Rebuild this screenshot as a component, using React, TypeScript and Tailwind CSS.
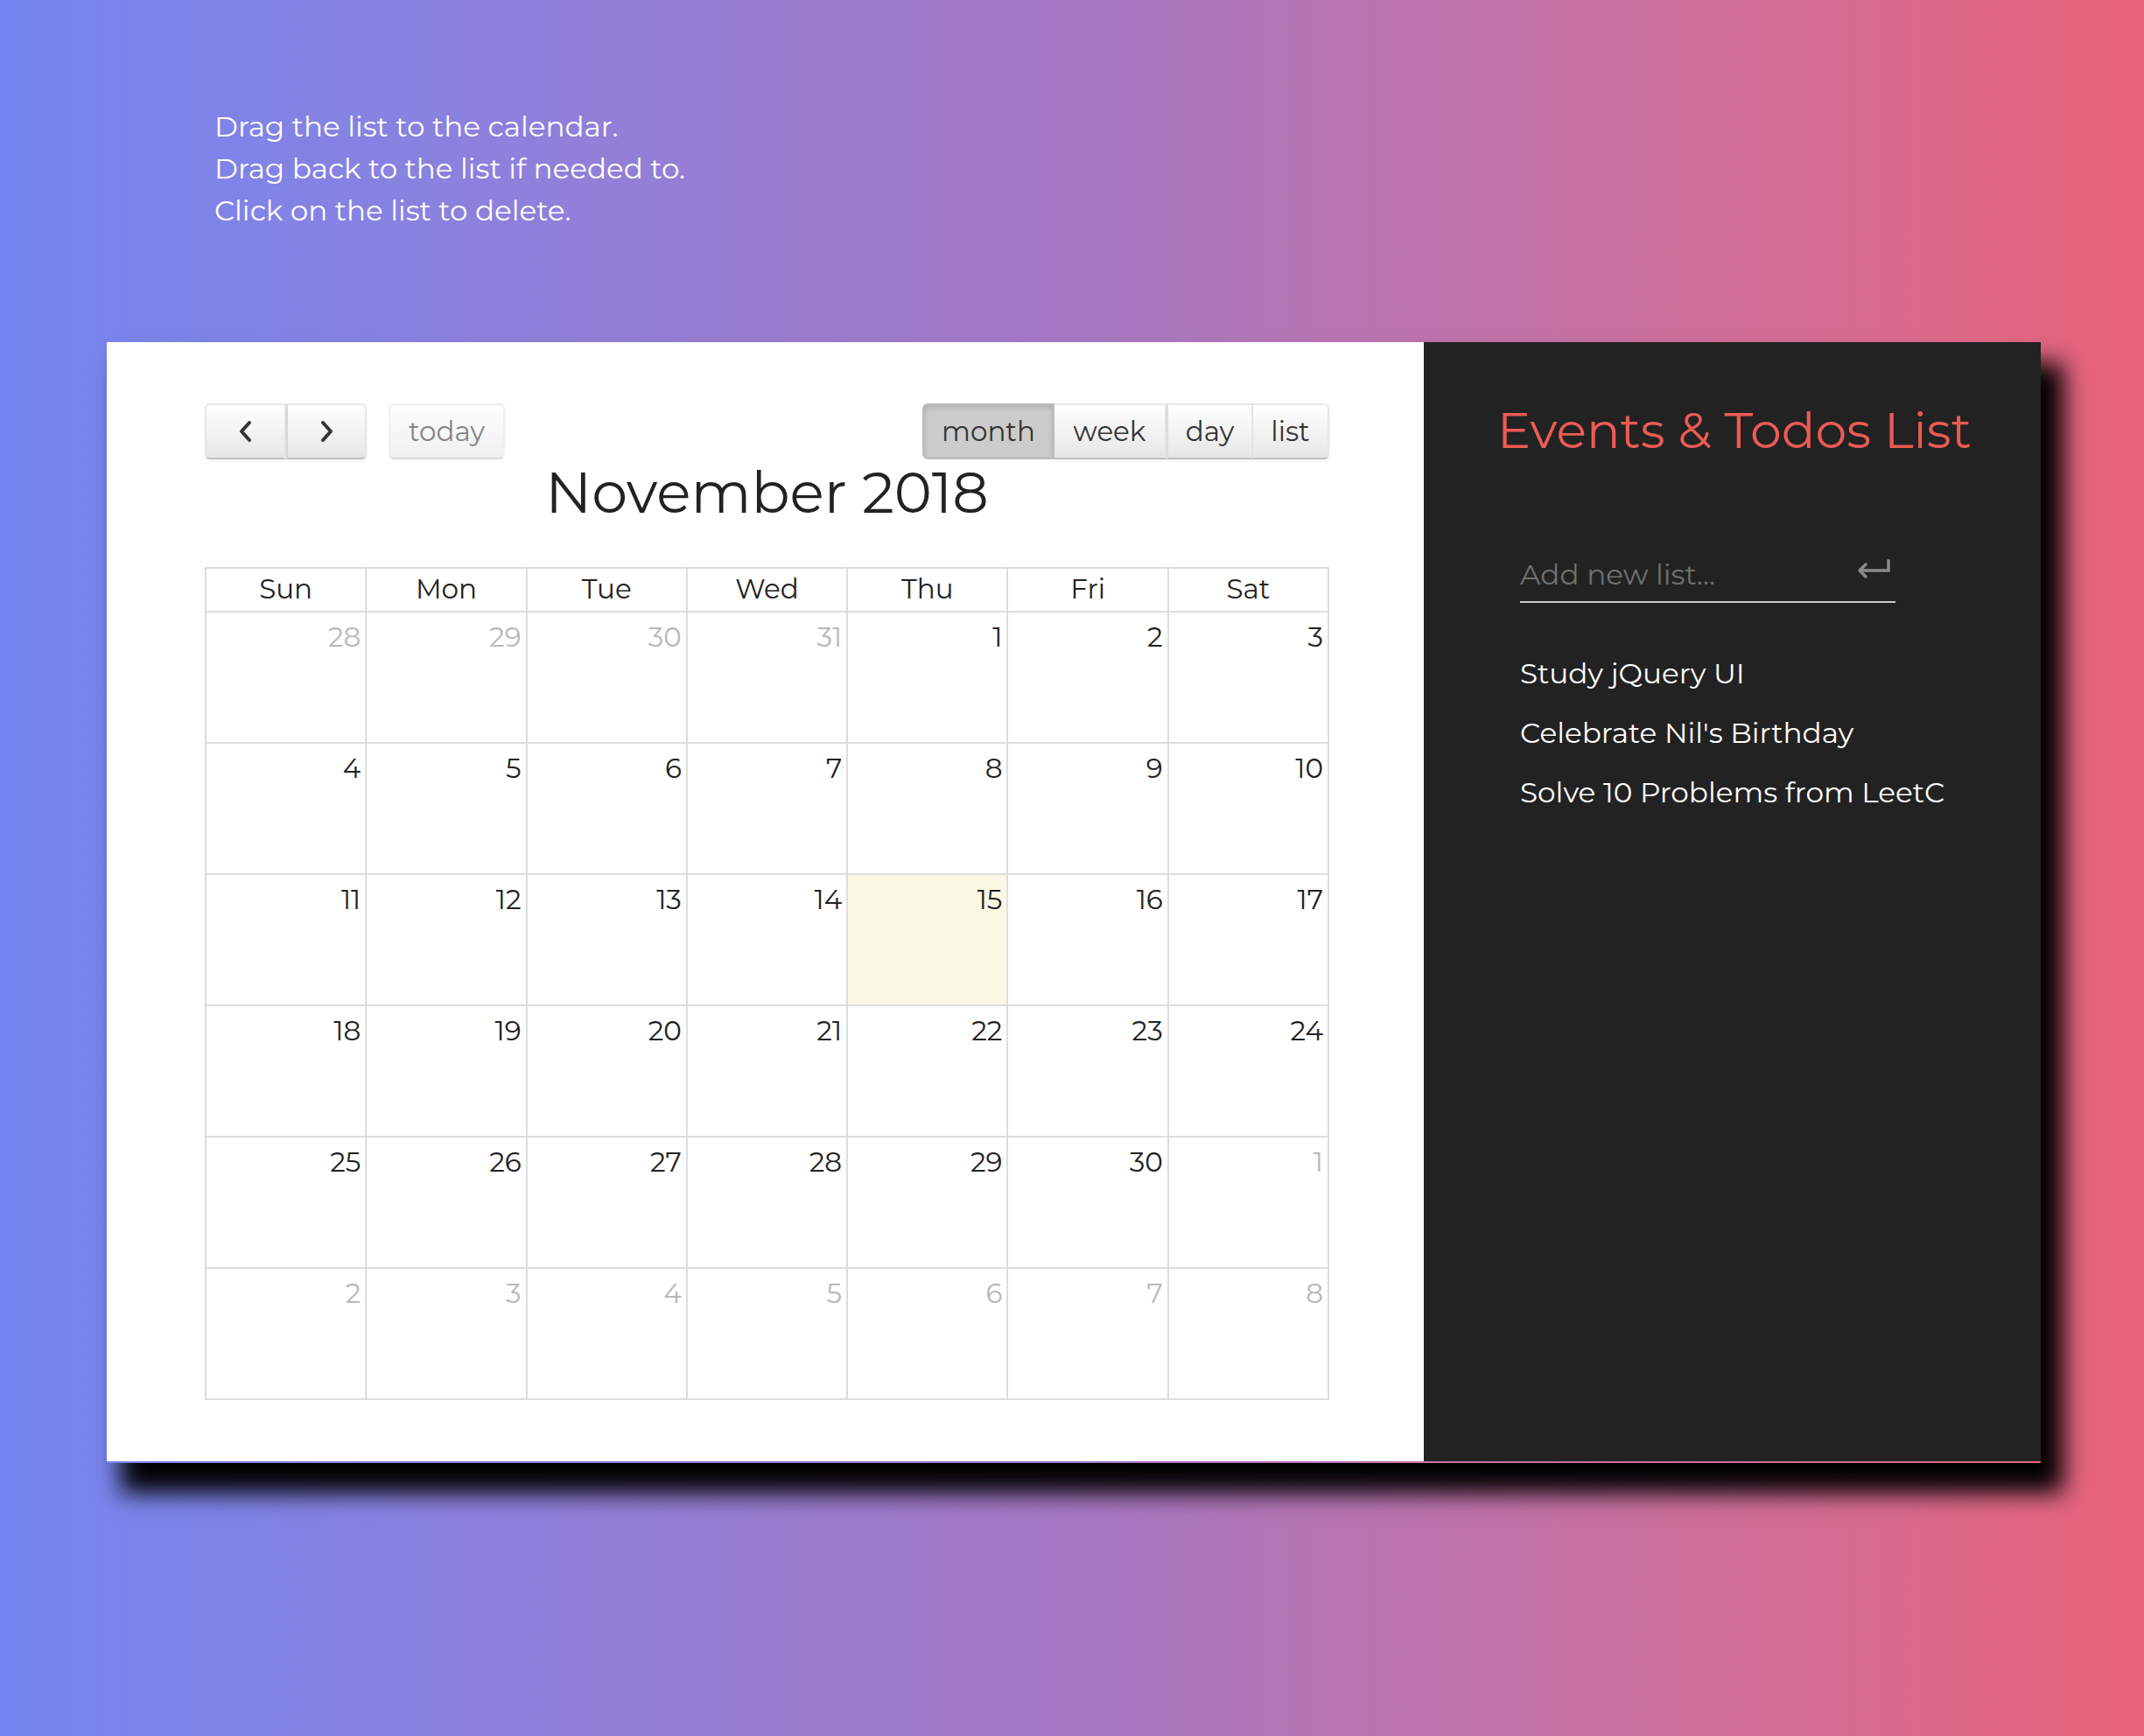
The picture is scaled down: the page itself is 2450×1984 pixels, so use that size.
const weeks: { d: number; other?: boolean; today?: boolean }[][] = [
  [{ d: 28, other: true }, { d: 29, other: true }, { d: 30, other: true }, { d: 31, other: true }, { d: 1 }, { d: 2 }, { d: 3 }],
  [{ d: 4 }, { d: 5 }, { d: 6 }, { d: 7 }, { d: 8 }, { d: 9 }, { d: 10 }],
  [{ d: 11 }, { d: 12 }, { d: 13 }, { d: 14 }, { d: 15, today: true }, { d: 16 }, { d: 17 }],
  [{ d: 18 }, { d: 19 }, { d: 20 }, { d: 21 }, { d: 22 }, { d: 23 }, { d: 24 }],
  [{ d: 25 }, { d: 26 }, { d: 27 }, { d: 28 }, { d: 29 }, { d: 30 }, { d: 1, other: true }],
  [{ d: 2, other: true }, { d: 3, other: true }, { d: 4, other: true }, { d: 5, other: true }, { d: 6, other: true }, { d: 7, other: true }, { d: 8, other: true }]
]

const dayNames = ['Sun', 'Mon', 'Tue', 'Wed', 'Thu', 'Fri', 'Sat']

const todos = ['Study jQuery UI', "Celebrate Nil's Birthday", 'Solve 10 Problems from LeetC']

const btn =
  'flex h-[64px] items-center justify-center border-2 border-[#e6e6e6] border-b-[#bfbfbf] bg-linear-to-b from-white to-[#e6e6e6] text-[31px] text-[#333] shadow-[0_2px_3px_rgba(0,0,0,0.06)]'

const Chevron = ({ dir }: { dir: 'left' | 'right' }) => (
  <svg width="22" height="28" viewBox="0 0 22 28" fill="none" stroke="#333" strokeWidth="4" strokeLinecap="round" strokeLinejoin="round">
    {dir === 'left' ? <polyline points="15,4 6,14 15,24" /> : <polyline points="7,4 16,14 7,24" />}
  </svg>
)

const EnterIcon = () => (
  <svg width="40" height="24" viewBox="0 0 40 24" fill="none" stroke="#8a8a8a" strokeWidth="3.5" strokeLinecap="square">
    <path d="M37 2v11H5" />
    <path d="M11 6l-7 7 7 7" strokeLinecap="round" strokeLinejoin="round" />
  </svg>
)

export default function App() {
  return (
    <div className="min-h-screen w-full bg-linear-to-r from-[#7386f1] via-[#a678c4] to-[#e9637a] font-[Montserrat,Inter,sans-serif]">
      <div className="pl-[245px] pt-[120px] text-[32.6px] leading-[48px] text-white">
        <p>Drag the list to the calendar.</p>
        <p>Drag back to the list if needed to.</p>
        <p>Click on the list to delete.</p>
      </div>

      <div className="ml-[122px] mt-[127px] flex h-[1281px] w-[2210px] pb-[2px] shadow-[21px_29px_26px_5px_#000]">
        <div className="w-[1505px] bg-white pl-[112px] pt-[70px]">
          <div className="w-[1285px]">
            <div className="flex h-[64px] justify-between">
              <div className="flex">
                <div className="flex">
                  <button className={`${btn} w-[93px] rounded-l-[6px]`}>
                    <Chevron dir="left" />
                  </button>
                  <button className={`${btn} w-[92px] rounded-r-[6px] border-l-[#d6d6d6]`}>
                    <Chevron dir="right" />
                  </button>
                </div>
                <button className={`${btn} ml-[25px] w-[133px] rounded-[6px] opacity-60 shadow-none`}>today</button>
              </div>
              <div className="flex">
                <button className="flex h-[64px] w-[151px] items-center justify-center rounded-l-[6px] border-2 border-[#bdbdbd] bg-[#cccccc] text-[31px] text-[#333] shadow-[inset_0_3px_6px_rgba(0,0,0,0.15)]">
                  month
                </button>
                <button className={`${btn} w-[128px] border-l-0`}>week</button>
                <button className={`${btn} w-[99px] border-l-[#dcdcdc]`}>day</button>
                <button className={`${btn} w-[87px] rounded-r-[6px] border-l-0`}>list</button>
              </div>
            </div>

            <h2 className="text-center text-[65px] leading-[76px] text-[#222]">November 2018</h2>

            <div className="mt-[47px] border-l-2 border-t-2 border-[#dddddd] text-[#222]">
              <div className="grid h-[50px] grid-cols-7">
                {dayNames.map((n) => (
                  <div key={n} className="border-b-2 border-r-2 border-[#dddddd] text-center text-[31px] leading-[46px]">
                    {n}
                  </div>
                ))}
              </div>
              {weeks.map((week, i) => (
                <div key={i} className="grid h-[150px] grid-cols-7">
                  {week.map((c, j) => (
                    <div
                      key={j}
                      className={`border-b-2 border-r-2 border-[#dddddd] pr-[5px] pt-[8px] text-right text-[31px] leading-[40px] ${
                        c.today ? 'bg-[#faf7e4]' : ''
                      } ${c.other ? 'text-[#b8b8b8]' : 'text-[#222]'}`}
                    >
                      {c.d}
                    </div>
                  ))}
                </div>
              ))}
            </div>
          </div>
        </div>

        <div className="flex-1 bg-[#222222] pl-[84px] pt-[68px]">
          <h1 className="text-[57px] leading-[66px] text-[#ec5b55]">Events &amp; Todos List</h1>
          <div className="ml-[26px] mt-[100px] flex h-[64px] w-[429px] items-center border-b-2 border-[#cccccc] pr-[5px]">
            <input
              className="h-full min-w-0 flex-1 bg-transparent text-[32.7px] text-white outline-none placeholder:text-[#707070]"
              placeholder="Add new list..."
            />
            <div className="-mt-[10px]">
              <EnterIcon />
            </div>
          </div>
          <ul className="ml-[26px] mt-[46px] text-[32.7px] leading-[68px] text-white">
            {todos.map((t) => (
              <li key={t} className="overflow-hidden whitespace-nowrap">
                {t}
              </li>
            ))}
          </ul>
        </div>
      </div>
    </div>
  )
}
